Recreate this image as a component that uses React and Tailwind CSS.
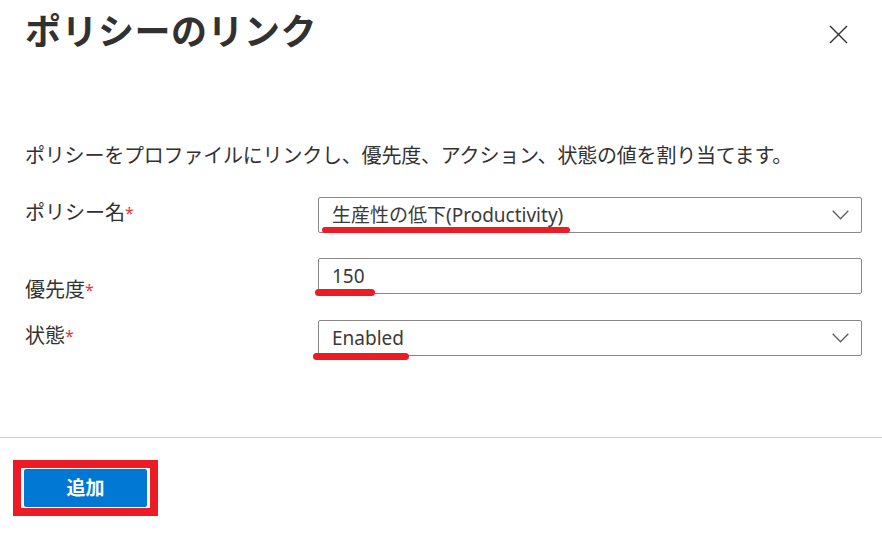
import { useState } from 'react'

const FONT = "font-['Noto_Sans','Noto_Sans_CJK_JP',sans-serif]"

function Chevron() {
  return (
    <svg width="17" height="10" viewBox="0 0 17 10" fill="none" className="shrink-0">
      <path d="M0.7 0.7 L8.5 8.8 L16.3 0.7" stroke="#605e5c" strokeWidth="1.3" />
    </svg>
  )
}

function Label({ text, pad }) {
  return (
    <div className={`w-[293px] shrink-0 text-[20px] leading-[28px] text-[#323130] ${pad}`}>
      {text}
      <span className="text-[#e0383e] text-[16px] align-top">*</span>
    </div>
  )
}

// red pen marks over the screenshot values
function Mark({ cls }) {
  return <div className={`absolute h-[6px] rounded-full bg-[#ed1c24] ${cls}`} />
}

export default function App() {
  const [priority] = useState('150')

  return (
    <div className={`w-[882px] h-[547px] bg-white text-[#323130] flex flex-col ${FONT}`}>
      {/* header */}
      <div className="flex justify-between items-start pl-[25px] pr-[34px] pt-[12px]">
        <h1 className="text-[36px] leading-[40px] font-bold tracking-[0.5px]">ポリシーのリンク</h1>
        <button className="mt-[13px]" aria-label="close">
          <svg width="19" height="19" viewBox="0 0 19 19">
            <path d="M1 1 L18 18 M18 1 L1 18" stroke="#323130" strokeWidth="1.4" />
          </svg>
        </button>
      </div>

      <p className="mt-[90px] pl-[25px] text-[20px] leading-[28px] tracking-[-0.2px]">
        ポリシーをプロファイルにリンクし、優先度、アクション、状態の値を割り当てます。
      </p>

      <div className="flex flex-col pl-[25px] pr-[20px] mt-[27px]">
        <div className="flex h-[36px] overflow-visible">
          <Label text="ポリシー名" pad="pt-[2px]" />
          <div className="relative flex-1 h-[36px] border border-[#8a8886] rounded-[2px] flex items-center justify-between pl-[13px] pr-[12px]">
            <span className="text-[19px] leading-[26px] text-[#3b3a39]">生産性の低下(Productivity)</span>
            <Chevron />
            <Mark cls="left-[3px] top-[29px] w-[248px]" />
          </div>
        </div>

        <div className="flex h-[36px] overflow-visible mt-[25px]">
          <Label text="優先度" pad="pt-[18px]" />
          <div className="relative flex-1 h-[36px] border border-[#8a8886] rounded-[2px] flex items-center pl-[13px]">
            <span className="text-[19px] leading-[26px] text-[#3b3a39]">{priority}</span>
            <Mark cls="left-[-4px] top-[30px] w-[60px] h-[7px]" />
          </div>
        </div>

        <div className="flex h-[36px] overflow-visible mt-[26px]">
          <Label text="状態" pad="pt-[2px]" />
          <div className="relative flex-1 h-[36px] border border-[#8a8886] rounded-[2px] flex items-center justify-between pl-[13px] pr-[12px]">
            <span className="text-[19px] leading-[26px] text-[#3b3a39]">Enabled</span>
            <Chevron />
            <Mark cls="left-[-6px] top-[32px] w-[96px] h-[7px]" />
          </div>
        </div>
      </div>

      <div className="mt-[81px] h-px bg-[#d2d0ce]" />

      <div className="pl-[13px] mt-[22px]">
        <div className="inline-flex border-[8px] border-[#ed1c24] px-[3px] py-[1px]">
          <button className="w-[123px] h-[38px] rounded-[2px] bg-[#0078d4] text-white text-[19px] font-bold leading-none">
            追加
          </button>
        </div>
      </div>
    </div>
  )
}
